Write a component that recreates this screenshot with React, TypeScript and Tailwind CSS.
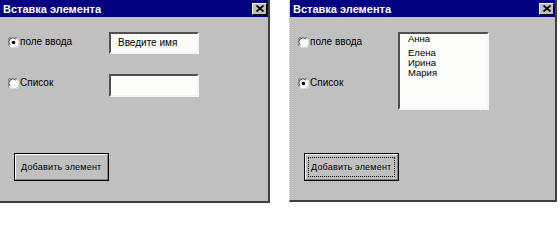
import React from 'react';

const font = { fontFamily: '"Liberation Sans", Arial, sans-serif' };

function CloseButton() {
  return (
    <div className="flex h-[12px] w-[15px] items-center justify-center border border-t-white border-l-white border-b-black border-r-black bg-[#c0c0c0]">
      <svg width="8" height="7" viewBox="0 0 8 7">
        <path d="M0.5 0.5 L7.5 6.5 M7.5 0.5 L0.5 6.5" stroke="#000" strokeWidth="1.6" />
      </svg>
    </div>
  );
}

function Radio({ checked }: { checked: boolean }) {
  return (
    <svg width="11" height="11" viewBox="0 0 12 12" className="shrink-0">
      <circle cx="6" cy="6" r="5.5" fill="#fff" />
      <path d="M1.2 9.5 A5.3 5.3 0 0 1 9.5 1.2" stroke="#808080" strokeWidth="1.2" fill="none" />
      <path d="M2.3 8.6 A4.2 4.2 0 0 1 8.6 2.3" stroke="#303030" strokeWidth="1" fill="none" />
      <path d="M10.8 2.5 A5.3 5.3 0 0 1 2.5 10.8" stroke="#e8e8e8" strokeWidth="1" fill="none" />
      {checked && <circle cx="6" cy="6" r="2" fill="#000" />}
    </svg>
  );
}

function RadioRow({ label, checked }: { label: string; checked: boolean }) {
  return (
    <div className="flex items-center gap-[1px] h-[12px]">
      <Radio checked={checked} />
      <span className="text-[10px] leading-[12px] text-black">{label}</span>
    </div>
  );
}

function AddButton({ focused }: { focused: boolean }) {
  return (
    <div className="ml-[14px] h-[28px] w-[95px] border border-black bg-[#c0c0c0]">
      <div className="flex h-full w-full items-center border border-t-white border-l-white border-b-[#808080] border-r-[#808080] p-[2px]">
        <div
          className={
            focused
              ? 'flex h-full w-full items-center border border-dotted border-black pl-[2px]'
              : 'flex h-full w-full items-center pl-[3px]'
          }
        >
          <span className="text-[9px] leading-[10px] tracking-[0.2px] text-black whitespace-nowrap">
            Добавить элемент
          </span>
        </div>
      </div>
    </div>
  );
}

function Window({ width, height, className, children }: { width: string; height: string; className?: string; children: React.ReactNode }) {
  return (
    <div className={`${width} ${height} flex flex-col bg-[#c0c0c0] border-r-2 border-b-2 border-r-[#404040] border-b-[#404040] ${className ?? ''}`}>
      <div className="flex h-[17px] items-center justify-between bg-[#000080] pl-[3px] pr-[1px]">
        <span className="text-[11px] font-bold leading-[14px] text-white">Вставка элемента</span>
        <CloseButton />
      </div>
      {children}
    </div>
  );
}

const fieldClass =
  'border-2 border-t-[#505050] border-l-[#505050] border-b-[#f4f4f4] border-r-[#f4f4f4] bg-[#fcfcfa]';

export default function App() {
  return (
    <div className="flex h-[206px] w-[560px] items-start bg-white" style={font}>
      <Window width="w-[270px]" height="h-[203px]">
        <div className="flex h-[136px] pt-[15px]">
          <div className="flex w-[109px] flex-col gap-[29px] pl-[8px] pt-[4px]">
            <RadioRow label="поле ввода" checked />
            <RadioRow label="Список" checked={false} />
          </div>
          <div className="flex flex-col gap-[20px]">
            <div className={`${fieldClass} w-[90px] h-[22px] flex items-center pl-[7px]`}>
              <span className="text-[10px] leading-[12px] text-black">Введите имя</span>
            </div>
            <div className={`${fieldClass} w-[90px] h-[23px]`} />
          </div>
        </div>
        <AddButton focused={false} />
      </Window>

      <Window
        width="w-[268px]"
        height="h-[202px]"
        className="ml-[19px] border-l border-l-[#e8e8e8] [border-left-style:dotted]"
      >
        <div className="flex h-[136px] pt-[15px]">
          <div className="flex w-[108px] flex-col gap-[29px] pl-[8px] pt-[4px]">
            <RadioRow label="поле ввода" checked={false} />
            <RadioRow label="Список" checked />
          </div>
          <div className={`${fieldClass} w-[91px] h-[78px] overflow-hidden pl-[8px]`}>
            <div className="text-[9.5px] leading-[10px] text-black">
              <div>Анна</div>
              <div className="mt-[4px]">Елена</div>
              <div>Ирина</div>
              <div>Мария</div>
            </div>
          </div>
        </div>
        <AddButton focused />
      </Window>
    </div>
  );
}
